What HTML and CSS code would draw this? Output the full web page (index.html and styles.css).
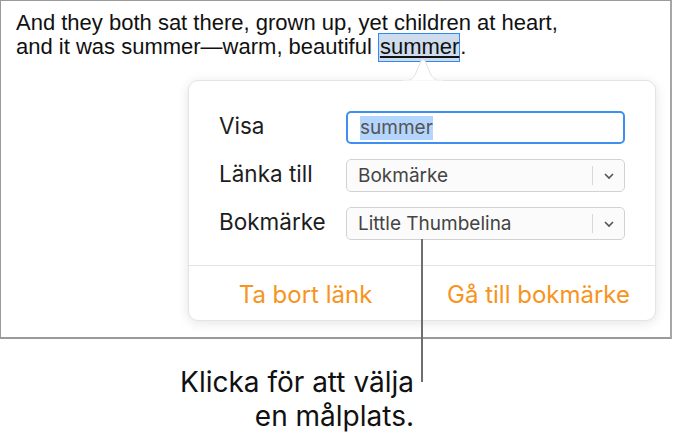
FILE: index.html
```html
<!DOCTYPE html>
<html>
  <head>
    <meta charset="utf-8">
    <title>Länk</title>
    <link rel="stylesheet" href="styles.css">
  </head>
  <body>
    <div id="page">
      <div id="doc">
        <p class="text">And they both sat there, grown up, yet children at heart,<br>and it was summer—warm, beautiful <span class="sel">summer</span>.</p>

        <svg class="arrow" width="40" height="24" viewBox="0 0 40 24">
          <path d="M0 23 C8 23 9 21 12 17 L18 3 Q20 0 22 3 L28 17 C31 21 32 23 40 23 Z" fill="#fff" stroke="#e2e2e2" stroke-width="1"/>
          <rect x="0" y="22.5" width="40" height="2" fill="#fff"/>
        </svg>
        <div id="pop">
          <div class="form">
            <div class="lbl">Visa</div>
            <div class="field focus"><span class="hl">summer</span></div>
            <div class="lbl">Länka till</div>
            <div class="field menu">
              <span class="val">Bokmärke</span>
              <span class="div"></span>
              <svg class="chev" width="12" height="8" viewBox="0 0 12 8"><path d="M2 2 L6 6 L10 2" fill="none" stroke="#555" stroke-width="1.6"/></svg>
            </div>
            <div class="lbl">Bokmärke</div>
            <div class="field menu">
              <span class="val">Little Thumbelina</span>
              <span class="div"></span>
              <svg class="chev" width="12" height="8" viewBox="0 0 12 8"><path d="M2 2 L6 6 L10 2" fill="none" stroke="#555" stroke-width="1.6"/></svg>
            </div>
          </div>
          <div class="acts">
            <div class="act">Ta bort länk</div>
            <div class="act">Gå till bokmärke</div>
          </div>
        </div>
      </div>
      <div class="pointer"></div>
      <div class="callout">Klicka för att välja<br>en målplats.</div>
    </div>
  </body>
</html>
```

FILE: styles.css
```css
*{
  margin:0;
  padding:0;
  box-sizing:border-box;
}
body{
  background:#fff;
  width:673px;
  height:443px;
  overflow:hidden;
}
#page{
  position:relative;
  width:673px;
  height:443px;
}
#doc{
  position:relative;
  width:672px;
  height:339px;
  border-top:1px solid #9a9a9a;
  border-left:1px solid #9a9a9a;
  border-right:2px solid #a6a6a6;
  border-bottom:2px solid #9a9a9a;
}
.text{
  font-family:"Liberation Sans", Arial, sans-serif;
  font-size:22px;
  line-height:24px;
  color:#111;
  padding:10px 0 0 15px;
}
.sel{
  background:#cfdcee;
  border:1px solid #2b8df2;
  padding:0 0 2px 1px;
  text-decoration:underline;
  text-underline-offset:2px;
}
.arrow{
  position:absolute;
  left:402px;
  top:57px;
  z-index:2;
}
#pop{
  position:absolute;
  left:187px;
  top:79px;
  width:468px;
  height:241px;
  background:#fff;
  border:1px solid #e4e4e4;
  border-radius:10px;
  box-shadow:0 2px 12px rgba(0,0,0,0.11);
  font-family:Inter, Roboto, sans-serif;
}
.form{
  display:grid;
  grid-template-columns:127px 279px;
  align-content:start;
  row-gap:15px;
  padding:30px 0 0 30px;
  height:185px;
  border-bottom:1px solid #e3e3e3;
}
.lbl{
  font-size:22.5px;
  color:#1d1d1d;
  display:flex;
  align-items:center;
  height:33px;
  padding-bottom:5px;
}
.field{
  height:33px;
  border:1px solid #d2d2d2;
  border-radius:5px;
  background:#fbfbfb;
  font-size:19px;
  color:#444;
  display:flex;
  align-items:center;
  padding-left:11px;
}
.focus{
  background:#fff;
  border:2px solid #3d8ff0;
  padding-left:12px;
}
.hl{
  background:#b4d5fd;
  color:#555;
  line-height:24px;
}
.val{
  flex:1;
}
.div{
  width:1px;
  height:19px;
  background:#d8d8d8;
}
.chev{
  margin:0 9px 0 10px;
}
.acts{
  display:grid;
  grid-template-columns:1fr 1fr;
  height:54px;
  align-items:center;
}
.act{
  text-align:center;
  font-size:24px;
  color:#f7941d;
  padding-top:2px;
}
.pointer{
  position:absolute;
  left:421px;
  top:239px;
  width:2px;
  height:143px;
  background:#6e6e6e;
  z-index:3;
}
.callout{
  width:414px;
  text-align:right;
  font-family:Inter, Roboto, sans-serif;
  font-size:28px;
  line-height:34px;
  color:#111;
  padding-top:26px;
}
```
